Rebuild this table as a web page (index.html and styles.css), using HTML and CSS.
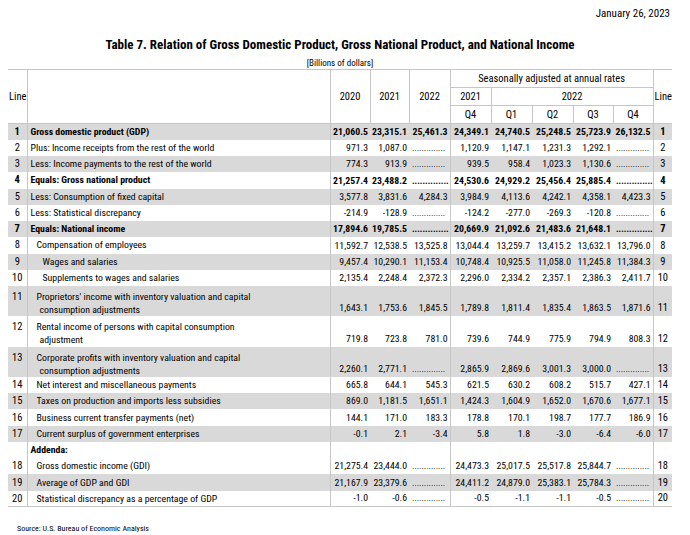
FILE: index.html
```html
<!DOCTYPE html>
<html lang="en">
<head>
<meta charset="utf-8">
<title>Table 7</title>
<link rel="stylesheet" href="styles.css">
</head>
<body>
<div class="page">
  <div class="date">January 26, 2023</div>
  <div class="title">Table 7. Relation of Gross Domestic Product, Gross National Product, and National Income</div>
  <div class="units">[Billions of dollars]</div>
  <table class="tbl">
    <colgroup>
      <col class="c-ln"><col class="c-lab"><col class="c-40"><col class="c-39"><col class="c-41"><col class="c-41"><col class="c-41"><col class="c-41"><col class="c-40"><col class="c-40"><col class="c-ln">
    </colgroup>
    <thead>
      <tr>
        <th rowspan="3" class="h-line vr">Line</th>
        <th rowspan="3" class="vr"></th>
        <th rowspan="3" class="vr">2020</th>
        <th rowspan="3" class="vr">2021</th>
        <th rowspan="3" class="vr">2022</th>
        <th colspan="5" class="vr hb">Seasonally adjusted at annual rates</th>
        <th rowspan="3" class="h-line">Line</th>
      </tr>
      <tr>
        <th class="vr hb">2021</th>
        <th colspan="4" class="vr hb">2022</th>
      </tr>
      <tr>
        <th class="vr">Q4</th>
        <th class="vr">Q1</th>
        <th class="vr">Q2</th>
        <th class="vr">Q3</th>
        <th class="vr">Q4</th>
      </tr>
    </thead>
    <tbody>
      <tr class="sh b"><td class="ln">1</td><td class="lab">Gross domestic product (GDP)</td><td>21,060.5</td><td>23,315.1</td><td class="vr">25,461.3</td><td>24,349.1</td><td>24,740.5</td><td>25,248.5</td><td>25,723.9</td><td class="vr">26,132.5</td><td class="rl">1</td></tr>
      <tr><td class="ln">2</td><td class="lab">Plus: Income receipts from the rest of the world</td><td>971.3</td><td>1,087.0</td><td class="vr dots">..............</td><td>1,120.9</td><td>1,147.1</td><td>1,231.3</td><td>1,292.1</td><td class="vr dots">..............</td><td class="rl">2</td></tr>
      <tr class="sh"><td class="ln">3</td><td class="lab">Less: Income payments to the rest of the world</td><td>774.3</td><td>913.9</td><td class="vr dots">..............</td><td>939.5</td><td>958.4</td><td>1,023.3</td><td>1,130.6</td><td class="vr dots">..............</td><td class="rl">3</td></tr>
      <tr class="b"><td class="ln">4</td><td class="lab">Equals: Gross national product</td><td>21,257.4</td><td>23,488.2</td><td class="vr dots">..............</td><td>24,530.6</td><td>24,929.2</td><td>25,456.4</td><td>25,885.4</td><td class="vr dots">..............</td><td class="rl">4</td></tr>
      <tr class="sh"><td class="ln">5</td><td class="lab">Less: Consumption of fixed capital</td><td>3,577.8</td><td>3,831.6</td><td class="vr">4,284.3</td><td>3,984.9</td><td>4,113.6</td><td>4,242.1</td><td>4,358.1</td><td class="vr">4,423.3</td><td class="rl">5</td></tr>
      <tr><td class="ln">6</td><td class="lab">Less: Statistical discrepancy</td><td>-214.9</td><td>-128.9</td><td class="vr dots">..............</td><td>-124.2</td><td>-277.0</td><td>-269.3</td><td>-120.8</td><td class="vr dots">..............</td><td class="rl">6</td></tr>
      <tr class="sh b"><td class="ln">7</td><td class="lab">Equals: National income</td><td>17,894.6</td><td>19,785.5</td><td class="vr dots">..............</td><td>20,669.9</td><td>21,092.6</td><td>21,483.6</td><td>21,648.1</td><td class="vr dots">..............</td><td class="rl">7</td></tr>
      <tr><td class="ln">8</td><td class="lab l1">Compensation of employees</td><td>11,592.7</td><td>12,538.5</td><td class="vr">13,525.8</td><td>13,044.4</td><td>13,259.7</td><td>13,415.2</td><td>13,632.1</td><td class="vr">13,796.0</td><td class="rl">8</td></tr>
      <tr class="sh"><td class="ln">9</td><td class="lab l2">Wages and salaries</td><td>9,457.4</td><td>10,290.1</td><td class="vr">11,153.4</td><td>10,748.4</td><td>10,925.5</td><td>11,058.0</td><td>11,245.8</td><td class="vr">11,384.3</td><td class="rl">9</td></tr>
      <tr><td class="ln">10</td><td class="lab l2">Supplements to wages and salaries</td><td>2,135.4</td><td>2,248.4</td><td class="vr">2,372.3</td><td>2,296.0</td><td>2,334.2</td><td>2,357.1</td><td>2,386.3</td><td class="vr">2,411.7</td><td class="rl">10</td></tr>
      <tr class="sh dbl"><td class="ln">11</td><td class="lab l1w">Proprietors' income with inventory valuation and capital<br>consumption adjustments</td><td>1,643.1</td><td>1,753.6</td><td class="vr">1,845.5</td><td>1,789.8</td><td>1,811.4</td><td>1,835.4</td><td>1,863.5</td><td class="vr">1,871.6</td><td class="rl">11</td></tr>
      <tr class="dbl"><td class="ln">12</td><td class="lab l1w">Rental income of persons with capital consumption<br>adjustment</td><td>719.8</td><td>723.8</td><td class="vr">781.0</td><td>739.6</td><td>744.9</td><td>775.9</td><td>794.9</td><td class="vr">808.3</td><td class="rl">12</td></tr>
      <tr class="sh dbl"><td class="ln">13</td><td class="lab l1w">Corporate profits with inventory valuation and capital<br>consumption adjustments</td><td>2,260.1</td><td>2,771.1</td><td class="vr dots">..............</td><td>2,865.9</td><td>2,869.6</td><td>3,001.3</td><td>3,000.0</td><td class="vr dots">..............</td><td class="rl">13</td></tr>
      <tr><td class="ln">14</td><td class="lab l1">Net interest and miscellaneous payments</td><td>665.8</td><td>644.1</td><td class="vr">545.3</td><td>621.5</td><td>630.2</td><td>608.2</td><td>515.7</td><td class="vr">427.1</td><td class="rl">14</td></tr>
      <tr class="sh"><td class="ln">15</td><td class="lab l1">Taxes on production and imports less subsidies</td><td>869.0</td><td>1,181.5</td><td class="vr">1,651.1</td><td>1,424.3</td><td>1,604.9</td><td>1,652.0</td><td>1,670.6</td><td class="vr">1,677.1</td><td class="rl">15</td></tr>
      <tr><td class="ln">16</td><td class="lab l1">Business current transfer payments (net)</td><td>144.1</td><td>171.0</td><td class="vr">183.3</td><td>178.8</td><td>170.1</td><td>198.7</td><td>177.7</td><td class="vr">186.9</td><td class="rl">16</td></tr>
      <tr class="sh"><td class="ln">17</td><td class="lab l1">Current surplus of government enterprises</td><td>-0.1</td><td>2.1</td><td class="vr">-3.4</td><td>5.8</td><td>1.8</td><td>-3.0</td><td>-6.4</td><td class="vr">-6.0</td><td class="rl">17</td></tr>
      <tr><td class="ln"></td><td class="lab bold">Addenda:</td><td></td><td></td><td class="vr"></td><td></td><td></td><td></td><td></td><td class="vr"></td><td class="rl"></td></tr>
      <tr><td class="ln">18</td><td class="lab l1">Gross domestic income (GDI)</td><td>21,275.4</td><td>23,444.0</td><td class="vr dots">..............</td><td>24,473.3</td><td>25,017.5</td><td>25,517.8</td><td>25,844.7</td><td class="vr dots">..............</td><td class="rl">18</td></tr>
      <tr class="sh"><td class="ln">19</td><td class="lab l1">Average of GDP and GDI</td><td>21,167.9</td><td>23,379.6</td><td class="vr dots">..............</td><td>24,411.2</td><td>24,879.0</td><td>25,383.1</td><td>25,784.3</td><td class="vr dots">..............</td><td class="rl">19</td></tr>
      <tr><td class="ln">20</td><td class="lab l1">Statistical discrepancy as a percentage of GDP</td><td>-1.0</td><td>-0.6</td><td class="vr dots">..............</td><td>-0.5</td><td>-1.1</td><td>-1.1</td><td>-0.5</td><td class="vr dots">..............</td><td class="rl">20</td></tr>
    </tbody>
  </table>
  <div class="source">Source: U.S. Bureau of Economic Analysis</div>
</div>
</body>
</html>
```
FILE: styles.css
```css
body {
  margin: 0;
  background: #fff;
  color: #000;
  font-family: Roboto, "Liberation Sans", Arial, sans-serif;
  font-stretch: 75%;
}
.page {
  width: 690px;
  padding-top: 7px;
  display: flex;
  flex-direction: column;
}
.date {
  align-self: flex-end;
  margin-right: 20px;
  font-size: 11px;
  line-height: 13px;
}
.title {
  width: 664px;
  margin: 17px 0 0 8px;
  text-align: center;
  font-weight: bold;
  font-size: 13px;
  font-stretch: 80%;
  line-height: 16px;
}
.units {
  width: 664px;
  margin: 5px 0 0 8px;
  text-align: center;
  font-size: 9px;
  line-height: 11px;
}
.tbl {
  margin-left: 8px;
  width: 664px;
  border-collapse: collapse;
  table-layout: fixed;
  border-top: 1px solid #c6c6c6;
  border-bottom: 1px solid #c6c6c6;
  font-size: 9.8px;
}
.c-ln { width: 19px; }
.c-lab { width: 303px; }
.c-40 { width: 40px; }
.c-39 { width: 39px; }
.c-41 { width: 41px; }
.tbl thead tr { height: 18px; }
.tbl th {
  font-weight: normal;
  font-size: 10.5px;
  padding: 0;
  text-align: center;
  vertical-align: middle;
  line-height: 14px;
}
.tbl thead tr:last-child th,
.tbl thead th[rowspan] {
  border-bottom: 1px solid #c6c6c6;
}
.tbl .h-line { text-align: left; padding-left: 1px; }
.tbl .vr { border-right: 1px solid #c6c6c6; }
.tbl .hb { border-bottom: 1px solid #c6c6c6; }
.tbl tbody tr { height: 16.25px; }
.tbl tbody tr.dbl { height: 30.3px; }
.tbl td {
  padding: 0 2px 1px 0;
  text-align: right;
  white-space: nowrap;
  line-height: 14px;
  vertical-align: bottom;
}
.tbl tr.sh td { background: #d9d9d9; }
.tbl tr.b td { font-weight: bold; }
.tbl td.ln {
  text-align: center;
  padding: 0;
  border-right: 1px solid #c6c6c6;
  vertical-align: middle;
  font-size: 10.5px;
}
.tbl td.rl { text-align: center; padding: 0 0 1px 0; font-size: 10.5px; }
.tbl td.lab {
  text-align: left;
  padding: 0 0 0 3px;
  border-right: 1px solid #c6c6c6;
  vertical-align: middle;
}
.tbl td.l1 { padding-left: 9px; }
.tbl td.l2 { padding-left: 15px; }
.tbl td.bold { font-weight: bold; }
.tbl td.dots {
  text-align: left;
  padding-left: 3px;
  font-size: 9px;
  font-weight: normal;
}
.tbl tr.dbl td.ln {
  vertical-align: top;
  line-height: 13px;
  padding-top: 4px;
}
.tbl tr.dbl td.lab {
  vertical-align: top;
  line-height: 13px;
  padding: 4px 0 0 12px;
  text-indent: -3px;
  white-space: normal;
}
.source {
  margin: 16px 0 0 17px;
  font-size: 8px;
  line-height: 11px;
}
```
